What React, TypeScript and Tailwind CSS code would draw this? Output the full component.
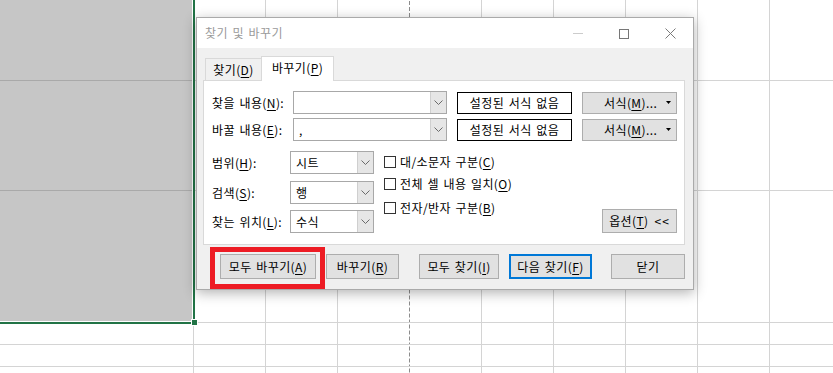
import React from "react";

function U({ c }: { c: string }) {
  return <span className="underline underline-offset-[2px] decoration-1">{c}</span>;
}

function Chevron() {
  return (
    <svg width="9" height="5" viewBox="0 0 9 5" className="block">
      <path d="M0.5 0.5 L4.5 4.5 L8.5 0.5" fill="none" stroke="#6a6a6a" strokeWidth="1" />
    </svg>
  );
}

function Combo({ w, value }: { w: string; value?: string }) {
  return (
    <div className={`flex h-[23px] border border-[#a8a8a8] bg-white ${w}`}>
      <div className="flex flex-1 items-center pl-[5px]">{value}</div>
      <div className="flex w-[16px] items-center justify-center border-l border-[#cfcfcf] bg-[#e6e6e6]">
        <Chevron />
      </div>
    </div>
  );
}

function Btn({ w, children, primary }: { w: string; children: React.ReactNode; primary?: boolean }) {
  return (
    <div
      className={`flex h-[25px] items-center justify-center bg-[#e1e1e1] ${w} ${
        primary ? "border-2 border-[#0078d7]" : "border border-[#adadad]"
      }`}
    >
      {children}
    </div>
  );
}

function Check({ children }: { children: React.ReactNode }) {
  return (
    <div className="flex h-[12px] items-center">
      <div className="h-[12px] w-[12px] border border-[#333333] bg-white" />
      <span className="ml-[4px]">{children}</span>
    </div>
  );
}

const cols = [0, 1, 2, 3, 4, 5, 6, 7, 8, 9];
const rows = [0, 1, 2, 3, 4, 5];

function cellClass(r: number, c: number) {
  if (c === 0 && r < 3) return "bg-[#c6c6c6] border-b border-[#a9a9a9]";
  if (c === 3)
    return "border-b border-[#d4d4d4] bg-[linear-gradient(to_bottom,#8c8c8c_65%,transparent_65%)] bg-[length:1px_6px] bg-repeat-y bg-right";
  return "border-r border-b border-[#d4d4d4]";
}

export default function App() {
  return (
    <div className="relative h-[373px] w-[833px] overflow-hidden bg-white font-['Noto_Sans_CJK_KR','Noto_Sans',sans-serif] text-[12px] leading-none tracking-[0.4px] [word-spacing:1.5px] text-black">
      {/* sheet grid */}
      <div className="grid grid-cols-[194px_repeat(9,72px)] grid-rows-[81px_110px_132px_22px_22px_22px]">
        {rows.map((r) =>
          cols.map((c) => <div key={`${r}-${c}`} className={cellClass(r, c)} />)
        )}
      </div>

      {/* selection border */}
      <div className="absolute left-0 top-0 h-[324px] w-[195px] border-b-2 border-r-2 border-[#217346]">
        <div className="h-full w-full border-b border-r border-white" />
      </div>
      <div className="absolute left-[191px] top-[319px] h-[7px] w-[7px] border border-white bg-[#217346]" />

      {/* dialog */}
      <div className="absolute left-[196px] top-[17px] flex h-[273px] w-[498px] flex-col border border-[#aaaaaa] bg-[#f0f0f0] shadow-[0_3px_12px_rgba(0,0,0,0.3)]">
        <div className="flex h-[30px] shrink-0 items-center bg-white">
          <span className="pl-[8px] text-[#9a9a9a]">찾기 및 바꾸기</span>
          <div className="ml-auto flex h-full">
            <div className="flex w-[46px] items-center justify-center pt-[1px]">
              <div className="h-px w-[10px] bg-[#cccccc]" />
            </div>
            <div className="flex w-[46px] items-center justify-center pt-[1px]">
              <div className="h-[10px] w-[10px] border border-[#777777]" />
            </div>
            <div className="flex w-[46px] items-center justify-center pt-[1px]">
              <svg width="11" height="11" viewBox="0 0 11 11">
                <path d="M0.5 0.5 L10.5 10.5 M10.5 0.5 L0.5 10.5" stroke="#7a7a7a" strokeWidth="1" fill="none" />
              </svg>
            </div>
          </div>
        </div>

        <div className="flex-1 pl-[6px] pr-[8px] pt-[8px]">
          {/* tabs */}
          <div className="flex h-[24px] items-end pl-[2px]">
            <div className="flex h-[22px] w-[56px] items-center justify-center border-l border-t border-[#d9d9d9]">
              찾기(<U c="D" />)
            </div>
            <div className="relative z-10 -mb-px flex h-[25px] w-[73px] items-center justify-center border border-b-0 border-[#d9d9d9] bg-white pb-[2px]">
              바꾸기(<U c="P" />)
            </div>
          </div>

          {/* panel */}
          <div className="h-[165px] w-[482px] border border-[#d9d9d9] bg-white pl-[8px] pr-[7px] pt-[10px]">
            <div className="flex h-[23px] items-center">
              <div className="w-[81px]">
                찾을 내용(<U c="N" />):
              </div>
              <Combo w="w-[154px]" />
              <div className="ml-[10px] flex h-[22px] w-[115px] items-center justify-center border border-black bg-white">
                설정된 서식 없음
              </div>
              <div className="ml-[10px] flex h-[22px] w-[95px] items-center border border-[#adadad] bg-[#e1e1e1]">
                <span className="pl-[21px]">
                  서식(<U c="M" />)...
                </span>
                <svg width="5" height="3" viewBox="0 0 5 3" className="ml-auto mr-[5px]">
                  <path d="M0 0 L5 0 L2.5 3 Z" fill="#000" />
                </svg>
              </div>
            </div>
            <div className="mt-[4px] flex h-[23px] items-center">
              <div className="w-[81px]">
                바꿀 내용(<U c="E" />):
              </div>
              <Combo w="w-[154px]" value="," />
              <div className="ml-[10px] flex h-[22px] w-[115px] items-center justify-center border border-black bg-white">
                설정된 서식 없음
              </div>
              <div className="ml-[10px] flex h-[22px] w-[95px] items-center border border-[#adadad] bg-[#e1e1e1]">
                <span className="pl-[21px]">
                  서식(<U c="M" />)...
                </span>
                <svg width="5" height="3" viewBox="0 0 5 3" className="ml-auto mr-[5px]">
                  <path d="M0 0 L5 0 L2.5 3 Z" fill="#000" />
                </svg>
              </div>
            </div>

            <div className="mt-[10px] flex">
              <div className="flex flex-col">
                <div className="flex items-center">
                  <div className="w-[78px]">
                    범위(<U c="H" />):
                  </div>
                  <Combo w="w-[84px]" value="시트" />
                </div>
                <div className="mt-[7px] flex items-center">
                  <div className="w-[78px]">
                    검색(<U c="S" />):
                  </div>
                  <Combo w="w-[84px]" value="행" />
                </div>
                <div className="mt-[6px] flex items-center">
                  <div className="w-[78px]">
                    찾는 위치(<U c="L" />):
                  </div>
                  <Combo w="w-[84px]" value="수식" />
                </div>
              </div>

              <div className="ml-[10px] flex flex-col pt-[5px]">
                <Check>
                  대/소문자 구분(<U c="C" />)
                </Check>
                <div className="mt-[10px]">
                  <Check>
                    전체 셀 내용 일치(<U c="O" />)
                  </Check>
                </div>
                <div className="mt-[12px]">
                  <Check>
                    전자/반자 구분(<U c="B" />)
                  </Check>
                </div>
              </div>

              <div className="ml-auto flex h-[24px] w-[75px] items-center justify-center self-end border border-[#adadad] bg-[#e1e1e1]">
                옵션(<U c="T" />)<span className="ml-[6px] tracking-[1px]">&lt;&lt;</span>
              </div>
            </div>
          </div>

          {/* bottom buttons */}
          <div className="mt-[9px] flex pl-[17px]">
            <Btn w="w-[97px]">
              모두 바꾸기(<U c="A" />)
            </Btn>
            <div className="ml-[10px]">
              <Btn w="w-[73px]">
                바꾸기(<U c="R" />)
              </Btn>
            </div>
            <div className="ml-[20px]">
              <Btn w="w-[80px]">
                모두 찾기(<U c="I" />)
              </Btn>
            </div>
            <div className="ml-[10px]">
              <Btn w="w-[83px]" primary>
                다음 찾기(<U c="F" />)
              </Btn>
            </div>
            <div className="ml-[19px]">
              <Btn w="w-[74px]">닫기</Btn>
            </div>
          </div>
        </div>
      </div>

      {/* red annotation */}
      <div className="absolute left-[210px] top-[247px] h-[42px] w-[115px] border-[5px] border-[#ed1c24]" />
    </div>
  );
}
